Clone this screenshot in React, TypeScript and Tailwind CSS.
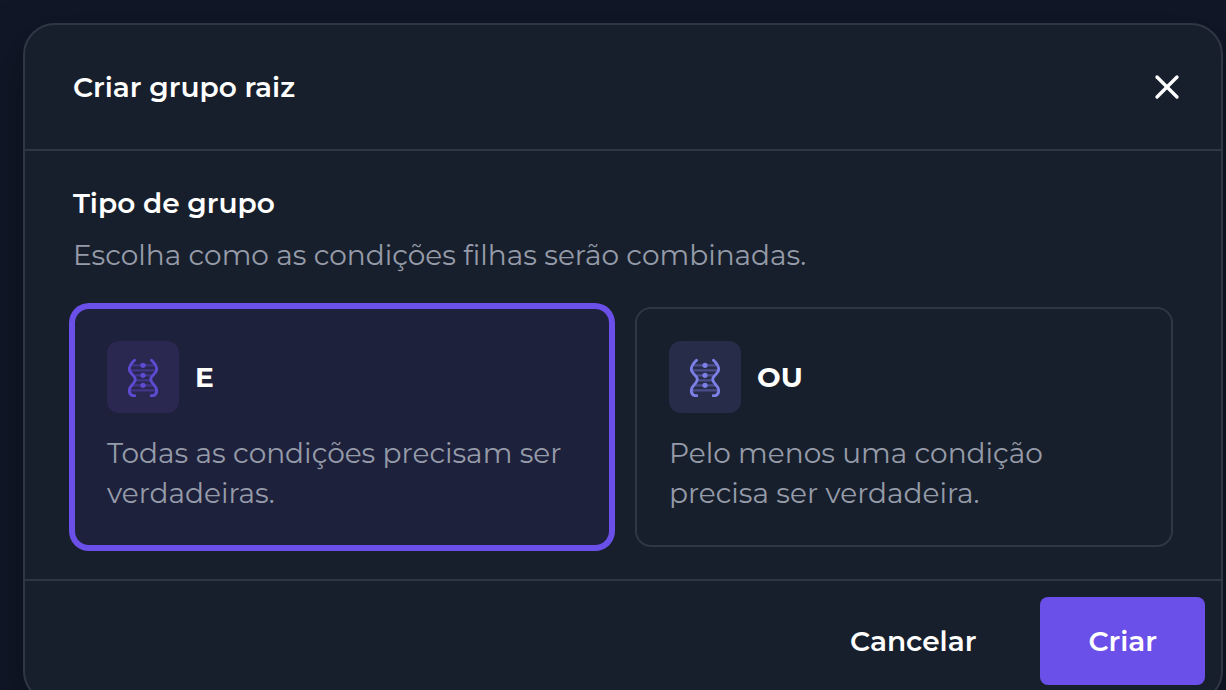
import { X } from "lucide-react"
import { useState } from "react"

type GroupType = "and" | "or"

const groupTypes: {
	value: GroupType
	label: string
	description: string
	iconClass: string
}[] = [
	{
		value: "and",
		label: "E",
		description: "Todas as condições precisam ser verdadeiras.",
		iconClass: "bg-[#2a2751] text-[#5f4bd2]",
	},
	{
		value: "or",
		label: "OU",
		description: "Pelo menos uma condição precisa ser verdadeira.",
		iconClass: "bg-[#272c48] text-[#7c7fe6]",
	},
]

function StrandIcon() {
	return (
		<svg viewBox="0 0 40 40" className="size-10" fill="none" aria-hidden="true">
			<path
				d="M9 8.300h22M7 13.300h26M10 18.300h20M12 23.300h16M9 28.300h22M7 33.300h26"
				stroke="currentColor"
				strokeWidth="2.200"
				opacity="0.42"
			/>
			<g stroke="currentColor" strokeWidth="2.900" strokeLinecap="round">
				<path d="M11.500 3.200C8.500 6 6.300 9 6.300 12.500C6.300 17 12.300 18 12.300 22.500C12.300 27 6.300 28 6.300 33.200C6.300 36.500 8 38.800 11.700 38.800" />
				<path d="M28.500 3.200C31.500 6 33.700 9 33.700 12.500C33.700 17 27.700 18 27.700 22.500C27.700 27 33.700 28 33.700 33.200C33.700 36.500 32 38.800 28.300 38.800" />
			</g>
			<g fill="currentColor">
				<circle cx="20" cy="8.300" r="2.600" />
				<circle cx="20" cy="18.300" r="2.600" />
				<circle cx="20" cy="28.300" r="2.600" />
			</g>
		</svg>
	)
}

export default function App() {
	const [selected, setSelected] = useState<GroupType>("and")

	return (
		<div className="h-screen overflow-hidden bg-[#111727] pt-[23px] pr-[3px] pl-[23px] font-[Montserrat,Inter,sans-serif] text-[28px] leading-10 text-white antialiased">
			<section
				role="dialog"
				aria-labelledby="dialog-title"
				className="rounded-[32px] border-2 border-[#2f3644] bg-[#181f2c] shadow-[0_16px_48px_rgba(0,0,0,0.35)]"
			>
				<header className="flex items-center justify-between border-b-2 border-[#2f3644] py-[42px] pr-[34px] pl-12">
					<h2 id="dialog-title" className="font-semibold">
						Criar grupo raiz
					</h2>
					<button type="button" aria-label="Fechar">
						<X className="size-10" strokeWidth={2} />
					</button>
				</header>

				<div className="px-12 py-8">
					<h3 id="type-title" className="font-semibold">
						Tipo de grupo
					</h3>
					<p className="mt-3 text-[#959ba9]">
						Escolha como as condições filhas serão combinadas.
					</p>
					<div
						role="group"
						aria-labelledby="type-title"
						className="mt-8 grid grid-cols-2 gap-6"
					>
						{groupTypes.map((type) => (
							<button
								key={type.value}
								type="button"
								aria-pressed={selected === type.value}
								onClick={() => setSelected(type.value)}
								className={`rounded-2xl border-2 p-8 text-left ${
									selected === type.value
										? "border-[#6a50e8] bg-[#1e213b] ring-4 ring-[#6a50e8]"
										: "border-[#2f3644]"
								}`}
							>
								<span className="flex items-center gap-4">
									<span
										className={`flex size-18 items-center justify-center rounded-xl ${type.iconClass}`}
									>
										<StrandIcon />
									</span>
									<span className="font-bold">{type.label}</span>
								</span>
								<span className="mt-5 block text-[#959ba9]">
									{type.description}
								</span>
							</button>
						))}
					</div>
				</div>

				<footer className="flex justify-end gap-4 border-t-2 border-[#2f3644] p-4 font-semibold">
					<button type="button" className="rounded-lg px-12 py-6">
						Cancelar
					</button>
					<button type="button" className="rounded-lg bg-[#6a50e8] px-12 py-6">
						Criar
					</button>
				</footer>
			</section>
		</div>
	)
}
